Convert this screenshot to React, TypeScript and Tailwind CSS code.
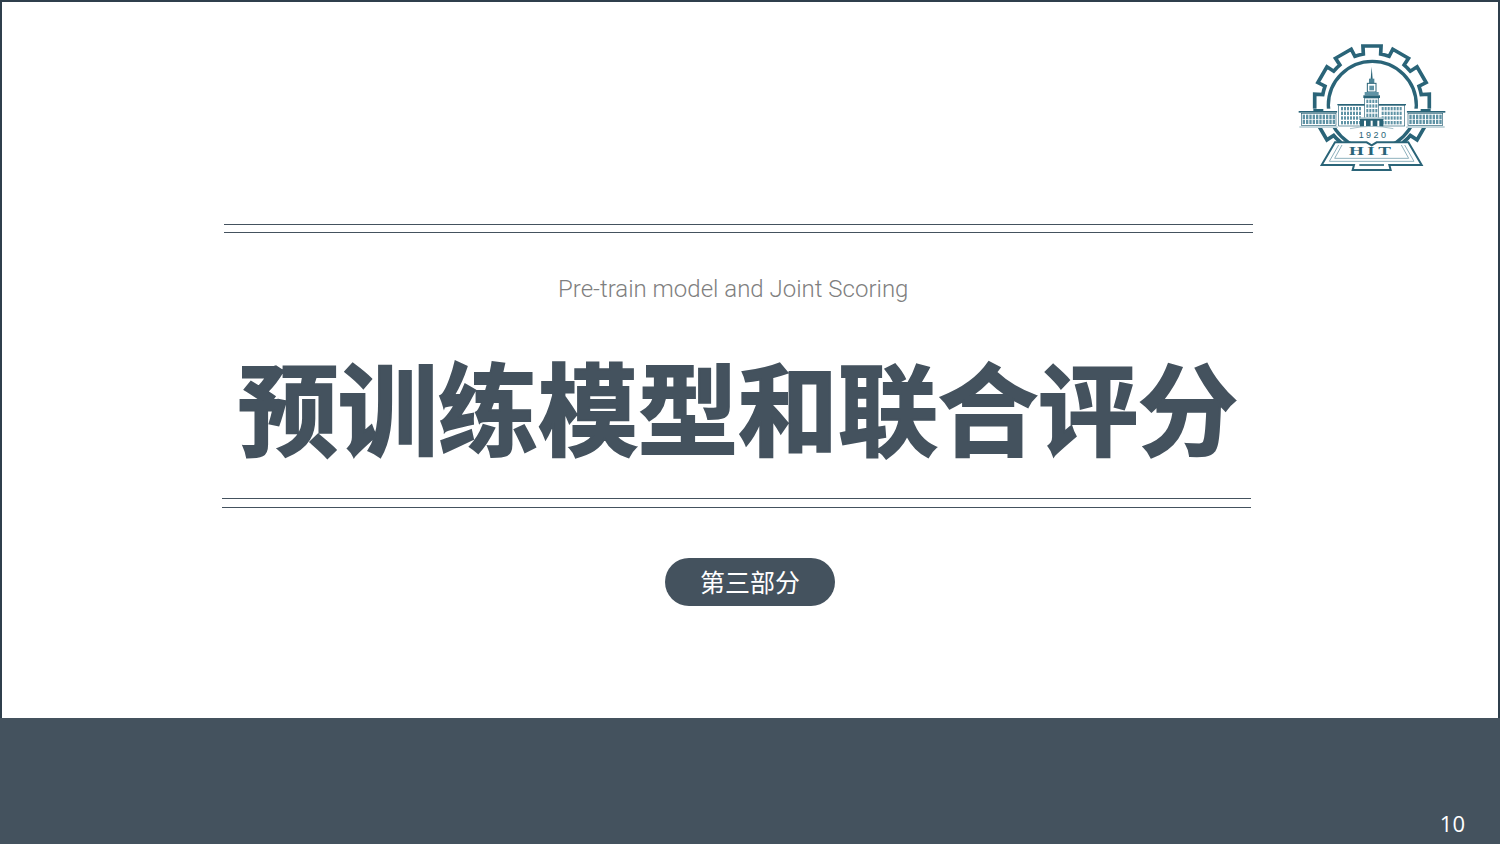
const TEAL = "#2a6478";
const WINDOW = "#5f93a5";

const gearPath = () => {
  const cx = 276;
  const cy = 220;
  const teeth = 12;
  const pts: string[] = [];
  for (let i = 0; i < teeth; i++) {
    const a = (i * 360) / teeth - 90;
    const steps: [number, number][] = [
      [-15, 150],
      [-10, 150],
      [-9, 174],
      [9, 174],
      [10, 150],
      [15, 150],
    ];
    steps.forEach(([d, r]) => {
      const t = ((a + d) * Math.PI) / 180;
      pts.push(`${(cx + r * Math.cos(t)).toFixed(1)} ${(cy + r * Math.sin(t)).toFixed(1)}`);
    });
  }
  return `M${pts.join("L")}Z`;
};

const Windows = ({ x, y, cols, rows, w = 7, h = 11, dx = 10, dy = 15 }: {
  x: number; y: number; cols: number; rows: number; w?: number; h?: number; dx?: number; dy?: number;
}) => (
  <g>
    {Array.from({ length: rows }).flatMap((_, r) =>
      Array.from({ length: cols }).map((_, c) => (
        <rect key={`${r}-${c}`} x={x + c * dx} y={y + r * dy} width={w} height={h} fill={WINDOW} />
      ))
    )}
  </g>
);

const Logo = () => (
  <svg width="180" height="150" viewBox="0 0 540 450">
    <path d={gearPath()} fill="none" stroke={TEAL} strokeWidth="11" />
    <circle cx="277" cy="226" r="132" fill="white" stroke={TEAL} strokeWidth="10" />

    {/* side wings */}
    <rect x="50" y="236" width="124" height="58" fill="white" />
    <rect x="376" y="236" width="124" height="58" fill="white" />
    <rect x="56" y="243" width="116" height="5" fill={TEAL} />
    <rect x="380" y="243" width="116" height="5" fill={TEAL} />
    <rect x="100" y="237" width="30" height="6" fill={TEAL} />
    <rect x="422" y="237" width="30" height="6" fill={TEAL} />
    <rect x="64" y="250" width="104" height="36" fill="white" stroke={TEAL} strokeWidth="2" />
    <rect x="384" y="250" width="104" height="36" fill="white" stroke={TEAL} strokeWidth="2" />
    <Windows x={68} y={254} cols={10} rows={2} h={13} dy={15} />
    <Windows x={388} y={254} cols={10} rows={2} h={13} dy={15} />
    <rect x="58" y="289" width="116" height="4" fill="#a9c3cc" />
    <rect x="378" y="289" width="116" height="4" fill="#a9c3cc" />

    {/* main block */}
    <rect x="172" y="222" width="208" height="68" fill="white" />
    <rect x="172" y="222" width="206" height="4" fill={TEAL} />
    <rect x="176" y="226" width="198" height="62" fill="white" stroke={TEAL} strokeWidth="2" />
    <Windows x={183} y={231} cols={7} rows={4} w={6} h={10} dx={9} dy={14} />
    <Windows x={305} y={231} cols={7} rows={4} w={6} h={10} dx={9} dy={14} />

    {/* tower */}
    <path d="M275 110 L278 148 L272 148 Z" fill={TEAL} />
    <rect x="267" y="146" width="16" height="14" fill="#4d8496" />
    <rect x="262" y="160" width="26" height="26" fill="white" stroke={TEAL} strokeWidth="3" />
    <rect x="268" y="167" width="14" height="14" fill={WINDOW} />
    <rect x="254" y="186" width="42" height="10" fill={WINDOW} />
    <rect x="250" y="196" width="50" height="8" fill={TEAL} />
    <rect x="254" y="204" width="42" height="64" fill="white" stroke={TEAL} strokeWidth="2" />
    <Windows x={259} y={209} cols={4} rows={4} w={6} h={10} dx={9} dy={14} />
    <rect x="240" y="266" width="70" height="24" fill={TEAL} />
    <rect x="236" y="262" width="78" height="5" fill="#a9c3cc" />
    <rect x="252" y="272" width="6" height="18" fill="white" />
    <rect x="272" y="272" width="6" height="18" fill="white" />
    <rect x="292" y="272" width="6" height="18" fill="white" />

    <path d="M210 296 Q275 282 340 296" fill="none" stroke="#a9c3cc" strokeWidth="3" />
    <text x="277" y="323" textAnchor="middle" fontSize="27" textLength="82" fill={TEAL} fontFamily="'Liberation Sans', sans-serif">1920</text>

    {/* plaque */}
    <path d="M165 337 L125 405 L222 405 L218 420 L332 420 L328 405 L425 405 L385 337 L290 337 L275 346 L260 337 Z" fill="white" stroke={TEAL} strokeWidth="6" />
    <path d="M176 345 L148 394 L402 394 L374 345" fill="none" stroke="#8fb1bd" strokeWidth="3" />
    <path d="M186 345 L164 385 L386 385 L364 345" fill="none" stroke="#8fb1bd" strokeWidth="3" />
    <text transform="translate(275 376) scale(1.5 1)" textAnchor="middle" fontSize="38" fontWeight="700" letterSpacing="7" fill={TEAL} fontFamily="'Liberation Serif', serif">HIT</text>
    <path d="M238 405 L312 405" stroke={TEAL} strokeWidth="5" />
  </svg>
);

export default function App() {
  return (
    <div className="w-[1500px] h-[844px] flex flex-col bg-white overflow-hidden font-['Noto_Sans_CJK_SC',sans-serif]">
      <main className="flex-1 border-2 border-b-0 border-[#2f3f4c] flex flex-col">
        <div className="flex justify-end pt-[28px] pr-[38px] h-[222px]">
          <Logo />
        </div>
        <div className="ml-[222px] w-[1029px] h-[9px] border-y border-[#44525e]" />

        <p className="mt-[38px] ml-[556px] text-[24px] leading-[36px] font-light text-[#7f7f7f] font-['Roboto',sans-serif]">
          Pre-train model and Joint Scoring
        </p>

        <h1 className="mt-[28px] ml-[236px] text-[100px] leading-[140px] font-bold text-[#44525e] whitespace-nowrap [-webkit-text-stroke:2px_#44525e]">
          预训练模型和联合评分
        </h1>

        <div className="mt-[23px] ml-[220px] w-[1029px] h-[10px] border-y border-[#44525e]" />

        <div className="mt-[50px] ml-[663px] w-[170px] h-[48px] rounded-full bg-[#44525e] flex items-center justify-center text-[25px] text-white">
          第三部分
        </div>
      </main>

      <footer className="h-[126px] shrink-0 bg-[#44525e] flex items-end justify-end pr-[35px] pb-[4px]">
        <span className="text-[22px] leading-[33px] text-white font-['Open_Sans',sans-serif]">10</span>
      </footer>
    </div>
  );
}
